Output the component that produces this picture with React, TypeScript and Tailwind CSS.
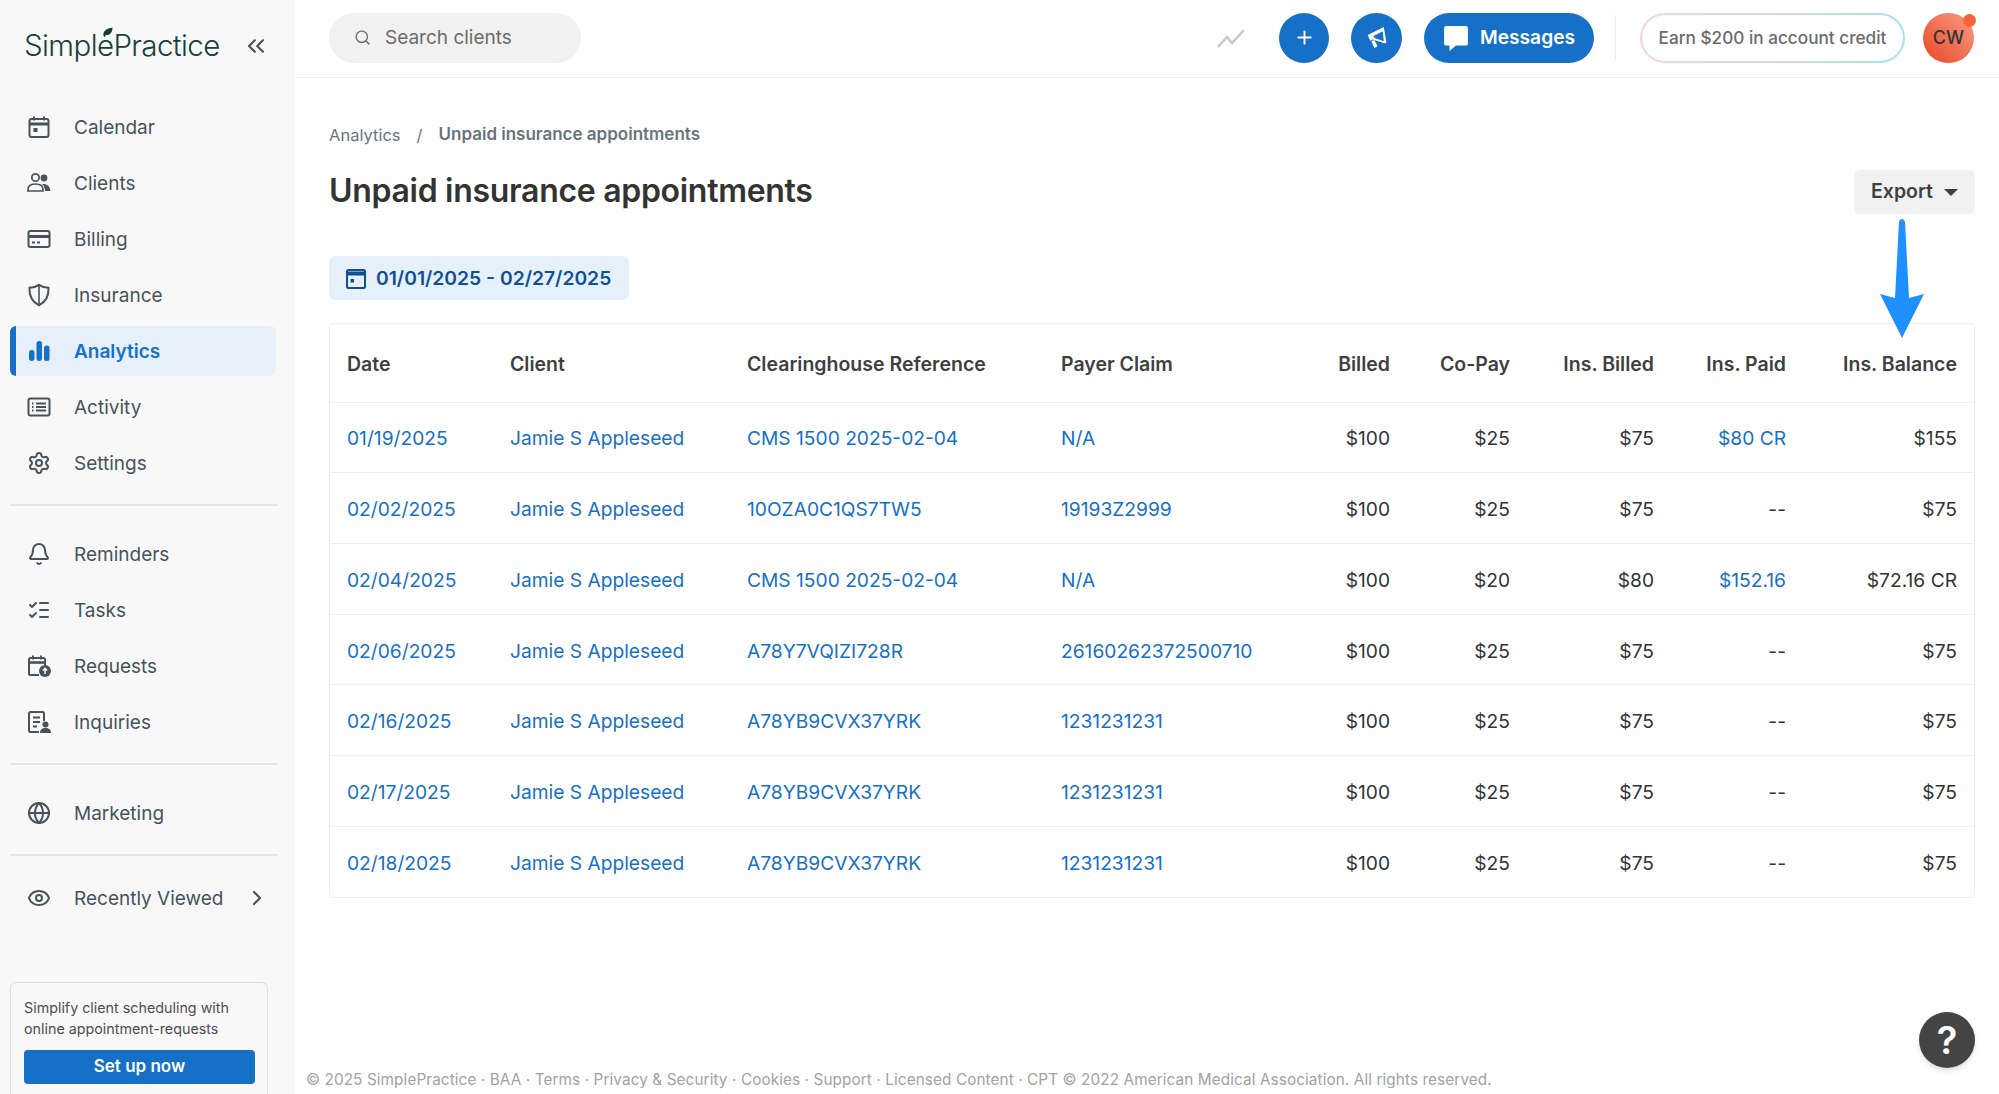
import { Bell, ChevronRight, ChevronsLeft, Eye, Globe, ListChecks, Plus, Search, Settings } from "lucide-react";
import type { ReactNode } from "react";

const ink = "#47535b";

function CalendarIcon() {
  return (
    <svg viewBox="0 0 24 24" className="w-6 h-6" fill="none" stroke={ink} strokeWidth="2">
      <rect x="2.5" y="4" width="19" height="18" rx="2" />
      <path d="M2.5 9h19" strokeWidth="3" />
      <path d="M7 1.5v4M17 1.5v4" />
      <rect x="6.5" y="13" width="4" height="4" fill={ink} stroke="none" />
    </svg>
  );
}

function ClientsIcon() {
  return (
    <svg viewBox="0 0 24 24" className="w-6 h-6" fill="none" stroke={ink} strokeWidth="1.7">
      <circle cx="8.5" cy="6.5" r="3.7" />
      <path d="M1 20v-1.5C1 15 4 13 8.5 13s7.5 2 7.5 5.5V20z" />
      <circle cx="17" cy="7" r="3.4" fill={ink} stroke="none" />
      <path d="M15 13c4.500-.6 8 1.800 8.500 7H18c0-3-1-5.500-3-7z" fill={ink} stroke="none" />
    </svg>
  );
}

function BillingIcon() {
  return (
    <svg viewBox="0 0 24 24" className="w-6 h-6" fill="none" stroke={ink} strokeWidth="2">
      <rect x="1.500" y="4" width="21" height="16" rx="2" />
      <path d="M1.500 9.500h21" strokeWidth="3" />
      <path d="M5 15.500h3M10 15.500h3" />
    </svg>
  );
}

function InsuranceIcon() {
  return (
    <svg viewBox="0 0 24 24" className="w-6 h-6" fill="none" stroke={ink} strokeWidth="2">
      <path d="M12 1.800c3 2 6 3 9.500 3 .4 8-2.500 14-9.500 17.500C5 18.800 2.100 12.800 2.500 4.800c3.500 0 6.500-1 9.500-3z" />
      <path d="M12 2v20" strokeWidth="1.600" />
    </svg>
  );
}

function AnalyticsIcon() {
  return (
    <svg viewBox="0 0 24 24" className="w-6 h-6" fill="#1670c7">
      <rect x="2" y="11" width="5.500" height="11" rx="2.700" />
      <rect x="9.500" y="2" width="5.500" height="20" rx="2.700" />
      <rect x="17" y="6.500" width="5.500" height="15.500" rx="2.500" />
    </svg>
  );
}

function ActivityIcon() {
  return (
    <svg viewBox="0 0 24 24" className="w-6 h-6" fill="none" stroke={ink} strokeWidth="2">
      <rect x="1.500" y="3.500" width="21" height="17" rx="2" />
      <path d="M9 8.500h10M9 12h10M9 15.500h10" />
      <path d="M5 8.500h1.500M5 12h1.500M5 15.500h1.500" />
    </svg>
  );
}

function RequestsIcon() {
  return (
    <svg viewBox="0 0 24 24" className="w-6 h-6" fill="none" stroke={ink} strokeWidth="2">
      <path d="M12 21H3.500a1.500 1.500 0 0 1-1.500-1.500V5.500A1.500 1.500 0 0 1 3.500 4h13A1.500 1.500 0 0 1 18 5.500V11" />
      <path d="M2 8.500h16" strokeWidth="2.600" />
      <path d="M6 1.500v4M14 1.500v4" />
      <circle cx="18" cy="17" r="6" fill={ink} stroke="none" />
      <path d="M18 20v-5.500M15.800 16.500l2.200-2.200 2.200 2.200" stroke="#f8f8f8" strokeWidth="1.500" />
    </svg>
  );
}

function InquiriesIcon() {
  return (
    <svg viewBox="0 0 24 24" className="w-6 h-6" fill="none" stroke={ink} strokeWidth="2">
      <path d="M12 22H3.500A1.500 1.500 0 0 1 2 20.500v-17A1.500 1.500 0 0 1 3.500 2h12A1.500 1.500 0 0 1 17 3.500V11" />
      <path d="M6 7.500h7M6 12h7M6 16.500h4" />
      <circle cx="18.500" cy="14.500" r="3" fill={ink} stroke="none" />
      <path d="M13 23c0-3.500 2-5 5.500-5s5.500 1.500 5.500 5z" fill={ink} stroke="none" />
    </svg>
  );
}

function NavItem({ icon, label, active }: { icon: ReactNode; label: string; active?: boolean }) {
  return (
    <a
      className={
        active
          ? "flex items-center h-[50px] w-[266px] ml-[10px] pl-[11px] rounded-md border-l-[6px] border-[#1670c7] bg-[#e6f0fa] text-[#1670c7] font-semibold"
          : "flex items-center h-[50px] w-[266px] ml-[10px] pl-[11px] border-l-[6px] border-transparent text-[#47535b]"
      }
    >
      <span className="w-[24px] flex justify-center shrink-0">{icon}</span>
      <span className="ml-[23px] text-[19px] leading-none">{label}</span>
    </a>
  );
}

function Sidebar() {
  const lucideCls = "w-6 h-6 text-[#47535b]";
  return (
    <aside className="flex flex-col w-[295px] h-full shrink-0 bg-[#f8f8f8]">
      <div className="flex items-center h-[102px] pl-[24px] pb-[11px]">
        <div className="relative w-[195px] whitespace-nowrap text-[29.500px] leading-none tracking-[-0.600px] text-[#173f3a] font-light">
          SimplePractice
          <svg viewBox="0 0 16 16" className="absolute left-[78px] top-[-5px] w-[12px] h-[12px]" fill="#173f3a">
            <path d="M2 13C1 7 6 3 14 2c0 7-4 11-9 10l-1 3z" />
          </svg>
        </div>
        <ChevronsLeft className="w-[28px] h-[28px] ml-[23px] text-[#47535b]" strokeWidth={1.8} />
      </div>

      <nav className="flex flex-col gap-1.5">
        <NavItem icon={<CalendarIcon />} label="Calendar" />
        <NavItem icon={<ClientsIcon />} label="Clients" />
        <NavItem icon={<BillingIcon />} label="Billing" />
        <NavItem icon={<InsuranceIcon />} label="Insurance" />
        <NavItem icon={<AnalyticsIcon />} label="Analytics" active />
        <NavItem icon={<ActivityIcon />} label="Activity" />
        <NavItem icon={<Settings className={lucideCls} strokeWidth={2} />} label="Settings" />
      </nav>
      <div className="h-0.5 w-[268px] ml-[10px] mt-[16px] mb-[23px] bg-[#e4e4e4]" />
      <nav className="flex flex-col gap-1.5">
        <NavItem icon={<Bell className={lucideCls} strokeWidth={2} />} label="Reminders" />
        <NavItem icon={<ListChecks className={lucideCls} strokeWidth={2} />} label="Tasks" />
        <NavItem icon={<RequestsIcon />} label="Requests" />
        <NavItem icon={<InquiriesIcon />} label="Inquiries" />
      </nav>
      <div className="h-0.5 w-[268px] ml-[10px] mt-[16px] mb-[23px] bg-[#e4e4e4]" />
      <NavItem icon={<Globe className={lucideCls} strokeWidth={2} />} label="Marketing" />
      <div className="h-0.5 w-[268px] ml-[10px] mt-[16px] mb-[17px] bg-[#e4e4e4]" />
      <div className="relative">
        <NavItem icon={<Eye className={lucideCls} strokeWidth={2} />} label="Recently Viewed" />
        <ChevronRight className="absolute left-[245px] top-[13px] w-6 h-6 text-[#47535b]" strokeWidth={2.2} />
      </div>

      <div className="mt-auto ml-[10px] w-[258px] h-[112px] border border-b-0 border-[#dedede] rounded-t-md px-[13px] pt-[14px]">
        <p className="text-[14.300px] leading-[21px] text-[#4c4f52]">Simplify client scheduling with online appointment-requests</p>
        <button className="w-[231px] h-[34px] mt-[11px] rounded bg-[#1670c7] text-white text-[17px] font-semibold">Set up now</button>
      </div>
    </aside>
  );
}

function TopBar() {
  return (
    <header className="flex items-center h-[78px] shrink-0 border-b border-[#f0f0f0] pb-[2px] pl-[34px] pr-[25px]">
      <div className="flex items-center w-[252px] h-[50px] rounded-full bg-[#f1f1f1] pl-[25px]">
        <Search className="w-[17px] h-[17px] text-[#6c6c6c]" strokeWidth={2} />
        <span className="ml-[14px] pt-[2px] text-[19px] text-[#6c6c6c]">Search clients</span>
      </div>
      <svg viewBox="0 0 28 20" className="ml-auto w-[28px] h-[20px]" fill="none" stroke="#c9c9c9" strokeWidth="2.500">
        <path d="M1 19l9-10 5 6L27 2" />
      </svg>
      <button className="flex items-center justify-center w-[50px] h-[50px] ml-[34px] rounded-full bg-[#1670c7] text-white">
        <Plus className="w-[21px] h-[21px]" strokeWidth={2.2} />
      </button>
      <button className="flex items-center justify-center w-[51px] h-[50px] ml-[22px] rounded-full bg-[#1670c7]">
        <svg viewBox="0 0 24 24" className="w-[25px] h-[25px]" fill="#fff">
          <path d="M19 2l2.500 15-2 .5L8.500 14 6 15l-2.500-5.500 2.500-1 13-6.500zM18 6l-9 4.500 1 2 9 3z" fillRule="evenodd" />
          <path d="M7 15.500l3-1 3 6-3 1.500z" />
        </svg>
      </button>
      <button className="flex items-center justify-center w-[170px] h-[50px] ml-[22px] rounded-full bg-[#1670c7] text-white text-[19.200px] font-semibold">
        <svg viewBox="0 0 24 24" className="w-[26px] h-[26px] mr-[11px]" fill="#fff">
          <path d="M3 1h18a2 2 0 0 1 2 2v14a2 2 0 0 1-2 2h-9l-6 5v-5H3a2 2 0 0 1-2-2V3a2 2 0 0 1 2-2z" />
        </svg>
        Messages
      </button>
      <div className="w-px h-[46px] ml-[21px] bg-[#ececec]" />
      <div className="ml-[24px] w-[265px] h-[50px] rounded-full p-0.5 bg-gradient-to-r from-[#f9d3d6] to-[#a3e0f3]">
        <div className="flex items-center justify-center h-full rounded-full bg-white text-[17.200px] font-medium text-[#6b6b6b]">
          Earn $200 in account credit
        </div>
      </div>
      <div className="relative flex items-center justify-center w-[51px] h-[50px] ml-[18px] rounded-full bg-gradient-to-tr from-[#e9411d] to-[#f79a84] text-[18px] font-medium text-[#333333]">
        CW
        <span className="absolute right-[-2px] top-[1px] w-[13px] h-[13px] rounded-full bg-[#f9643a]" />
      </div>
    </header>
  );
}

type Row = {
  date: string;
  ref: string;
  claim: string;
  copay: string;
  insBilled: string;
  insPaid: string;
  balance: string;
};

const rows: Row[] = [
  { date: "01/19/2025", ref: "CMS 1500 2025-02-04", claim: "N/A", copay: "$25", insBilled: "$75", insPaid: "$80 CR", balance: "$155" },
  { date: "02/02/2025", ref: "10OZA0C1QS7TW5", claim: "19193Z2999", copay: "$25", insBilled: "$75", insPaid: "--", balance: "$75" },
  { date: "02/04/2025", ref: "CMS 1500 2025-02-04", claim: "N/A", copay: "$20", insBilled: "$80", insPaid: "$152.16", balance: "$72.16 CR" },
  { date: "02/06/2025", ref: "A78Y7VQIZI728R", claim: "26160262372500710", copay: "$25", insBilled: "$75", insPaid: "--", balance: "$75" },
  { date: "02/16/2025", ref: "A78YB9CVX37YRK", claim: "1231231231", copay: "$25", insBilled: "$75", insPaid: "--", balance: "$75" },
  { date: "02/17/2025", ref: "A78YB9CVX37YRK", claim: "1231231231", copay: "$25", insBilled: "$75", insPaid: "--", balance: "$75" },
  { date: "02/18/2025", ref: "A78YB9CVX37YRK", claim: "1231231231", copay: "$25", insBilled: "$75", insPaid: "--", balance: "$75" },
];

function AppointmentsTable() {
  const th = "pl-[17px] pr-[18px] pt-[3px] font-semibold text-[#3f3f3f] text-[19.500px]";
  const td = "pl-[17px] pr-[18px] pt-[3px] text-[19.200px]";
  const link = "text-[#1670c7]";
  return (
    <div className="mt-[23px] border border-[#efefef] rounded-sm">
      <table className="w-full table-fixed border-collapse">
        <thead>
          <tr className="h-[78px]">
            <th className={`${th} w-[163px] text-left`}>Date</th>
            <th className={`${th} w-[237px] text-left`}>Client</th>
            <th className={`${th} w-[314px] text-left`}>Clearinghouse Reference</th>
            <th className={`${th} w-[246px] text-left`}>Payer Claim</th>
            <th className={`${th} w-[118px] text-right`}>Billed</th>
            <th className={`${th} w-[120px] text-right`}>Co-Pay</th>
            <th className={`${th} w-[144px] text-right`}>Ins. Billed</th>
            <th className={`${th} w-[132px] text-right`}>Ins. Paid</th>
            <th className={`${th} !pr-[17px] text-right`}>Ins. Balance</th>
          </tr>
        </thead>
        <tbody>
          {rows.map((r) => (
            <tr key={r.date} className="h-[70.700px] border-t border-[#efefef] text-[#333333]">
              <td className={`${td} ${link}`}>{r.date}</td>
              <td className={`${td} ${link}`}>Jamie S Appleseed</td>
              <td className={`${td} ${link}`}>{r.ref}</td>
              <td className={`${td} ${link}`}>{r.claim}</td>
              <td className={`${td} text-right`}>$100</td>
              <td className={`${td} text-right`}>{r.copay}</td>
              <td className={`${td} text-right`}>{r.insBilled}</td>
              <td className={r.insPaid === "--" ? `${td} text-right` : `${td} text-right ${link}`}>{r.insPaid}</td>
              <td className={`${td} !pr-[17px] text-right`}>{r.balance}</td>
            </tr>
          ))}
        </tbody>
      </table>
    </div>
  );
}

export default function App() {
  return (
    <div className="relative flex w-[1999px] h-[1094px] overflow-hidden bg-white font-['Inter',sans-serif]">
      <Sidebar />
      <main className="flex flex-col flex-1 min-w-0">
        <TopBar />
        <div className="flex flex-col flex-1 pl-[34px] pr-[24px] pt-[46px]">
          <div className="flex items-center h-[22px] text-[16.500px] text-[#67747d]">
            <span>Analytics</span>
            <span className="mx-[16px]">/</span>
            <span className="text-[17px] font-semibold">Unpaid insurance appointments</span>
          </div>
          <div className="flex items-start justify-between">
            <h1 className="mt-[25px] text-[32px] leading-[40px] font-semibold tracking-[-0.300px] text-[#333333]">Unpaid insurance appointments</h1>
            <button className="flex items-center justify-center w-[121px] h-[44px] mt-[24px] rounded-md bg-[#f1f1f1] text-[19.500px] font-semibold text-[#3f3f3f]">
              Export
              <span className="ml-[11px] w-0 h-0 border-x-[7px] border-t-[7px] border-x-transparent border-t-[#3f3f3f]" />
            </button>
          </div>
          <div className="flex items-center w-[300px] h-[44px] mt-[42px] pl-[17px] pt-[1px] rounded-md bg-[#e6f0fa] text-[19.300px] font-semibold text-[#0f4f94]">
            <svg viewBox="0 0 20 22" className="w-[20px] h-[22px] mr-[10px]" fill="none" stroke="#0f4f94" strokeWidth="2">
              <rect x="1" y="2" width="18" height="18" rx="1.500" />
              <path d="M1 5.500h18" strokeWidth="4" />
              <rect x="4.500" y="11" width="3.500" height="3.500" fill="#0f4f94" stroke="none" />
            </svg>
            01/01/2025 - 02/27/2025
          </div>
          <AppointmentsTable />
          <p className="mt-auto mb-[2px] ml-[-23px] text-[15.300px] text-[#a2a2a2] tracking-[0.100px] whitespace-nowrap">
            © 2025 SimplePractice · BAA · Terms · Privacy &amp; Security · Cookies · Support · Licensed Content · CPT © 2022 American Medical Association. All rights reserved.
          </p>
        </div>
      </main>

      {/* annotation arrow */}
      <svg viewBox="0 0 44 120" className="absolute left-[1880px] top-[219px] w-[44px] h-[120px]" fill="#1e90ff">
        <path d="M19 3c1-4 5-4 6 0l4 76 15-4-22 44L0 75l15 4z" />
      </svg>
      <button className="absolute left-[1919px] top-[1012px] flex items-center justify-center w-[56px] h-[56px] rounded-full bg-[#444444] text-white text-[38px] font-semibold shadow-md">
        ?
      </button>
    </div>
  );
}
